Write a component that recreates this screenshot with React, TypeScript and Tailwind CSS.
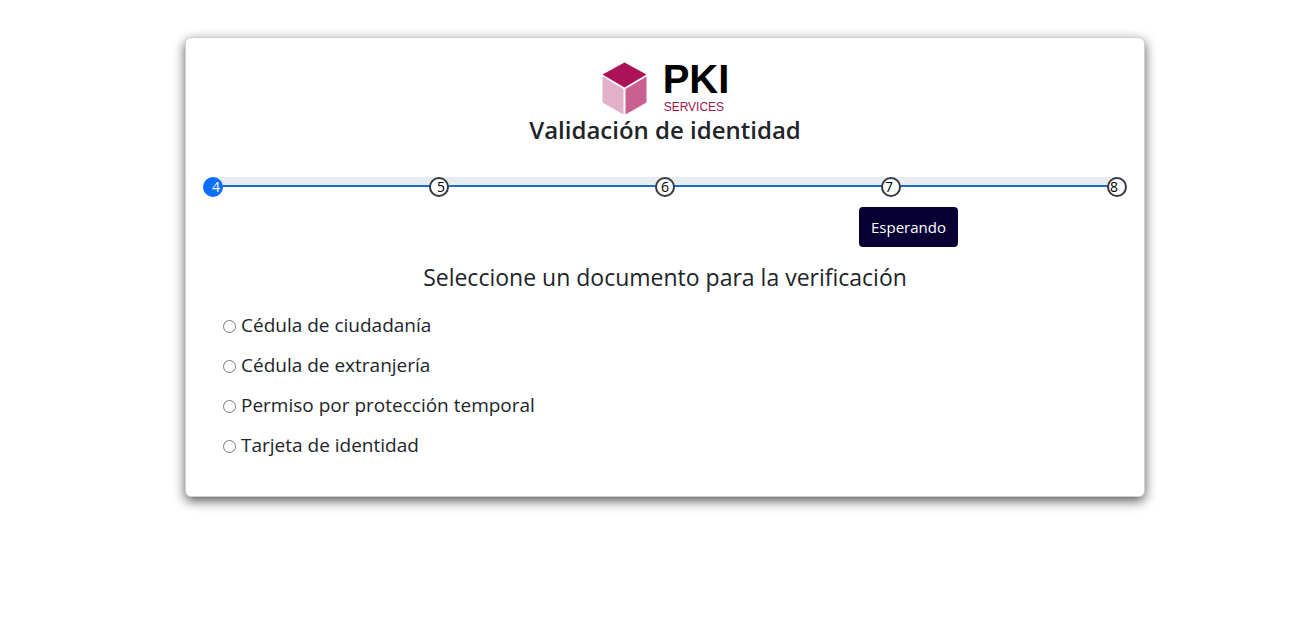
import { Fragment, useState } from "react";

const steps = [4, 5, 6, 7, 8];

const digitAlign: Record<number, string> = {
  4: "justify-end pr-px",
  5: "justify-end pr-[2px]",
  6: "justify-center",
  7: "justify-start pl-[2px]",
  8: "justify-start pl-px",
};

const documents = [
  { id: "cc", label: "Cédula de ciudadanía" },
  { id: "ce", label: "Cédula de extranjería" },
  { id: "ppt", label: "Permiso por protección temporal" },
  { id: "ti", label: "Tarjeta de identidad" },
];

function Logo() {
  return (
    <div className="flex justify-center gap-4">
      <svg className="h-[53px] w-[46px]" viewBox="0 0 46 53" aria-hidden="true">
        <path d="M23.5 0.5 L45.5 12.5 L23.5 25.5 L1.5 12.5 Z" fill="#ab1257" />
        <path d="M1.5 14.5 L22.5 27 V52.5 L1.5 40.5 Z" fill="#e3b0ca" />
        <path d="M45.5 14.5 L24.5 27 V52.5 L45.5 40.5 Z" fill="#c9608f" />
      </svg>
      <div className="flex flex-col font-['Liberation_Sans',Arial,sans-serif]">
        <span className="text-[40px] font-bold leading-[34px] text-black">PKI</span>
        <span className="pl-px text-[12px] leading-[22px] text-[#a3154f]">SERVICES</span>
      </div>
    </div>
  );
}

function Progress({ current }: { current: number }) {
  return (
    <div className="flex">
      {steps.map((step, index) => (
        <Fragment key={step}>
          {index > 0 && (
            <div className="-mx-2 h-[10px] flex-1 border-b-2 border-[#1b6ec2] bg-[#e9ecef]" />
          )}
          <div
            className={`z-10 flex size-5 items-center rounded-full border-2 text-[14px] leading-4 ${digitAlign[step]} ${
              step === current
                ? "border-[#0d6efd] bg-[#0d6efd] text-white"
                : "border-[#343a40] bg-white text-black"
            }`}
          >
            {step}
          </div>
        </Fragment>
      ))}
    </div>
  );
}

export default function App() {
  const [selected, setSelected] = useState("");

  return (
    <main className="flex min-h-screen items-start justify-center bg-white pt-[37px] pl-[34px] font-['Open_Sans',sans-serif] text-[#212529]">
      <section className="w-full max-w-[960px] rounded-md border border-[#d0d0d0] bg-white px-[17px] pt-6 pb-[31px] shadow-[0_4px_12px_rgba(0,0,0,0.65)]">
        <Logo />
        <h1 className="text-center text-[24px] font-semibold leading-6">Validación de identidad</h1>

        <div className="mt-[35px]">
          <Progress current={4} />
          <button
            type="button"
            className="mt-[10px] ml-[71%] h-10 rounded bg-[#080035] px-3 text-[15px] text-white"
          >
            Esperando
          </button>
        </div>

        <form className="mt-[14px] px-5">
          <fieldset>
            <legend className="mx-auto text-center text-[23px] leading-8">
              Seleccione un documento para la verificación
            </legend>
            <div className="mt-3">
              {documents.map((doc) => (
                <label key={doc.id} htmlFor={doc.id} className="flex h-10 items-center gap-[5px] text-[19px]">
                  <input
                    id={doc.id}
                    type="radio"
                    name="document"
                    value={doc.id}
                    checked={selected === doc.id}
                    onChange={() => setSelected(doc.id)}
                    className="mt-0.5 size-[13px]"
                  />
                  {doc.label}
                </label>
              ))}
            </div>
          </fieldset>
        </form>
      </section>
    </main>
  );
}
